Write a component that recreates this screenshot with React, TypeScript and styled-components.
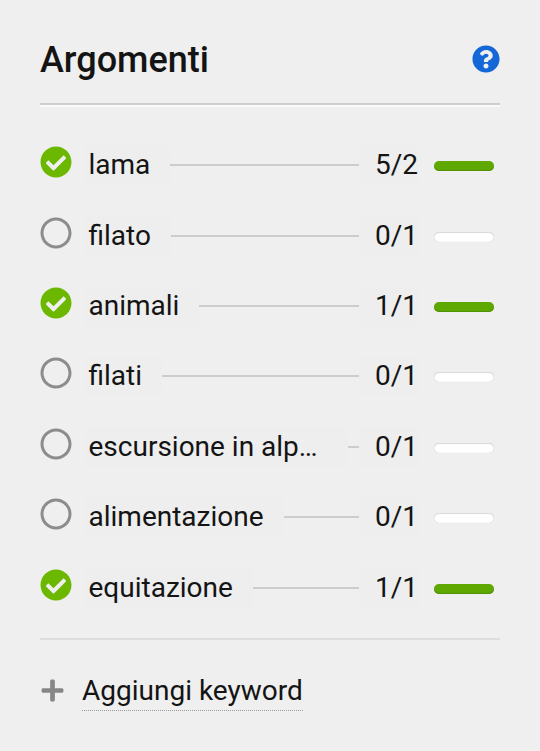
import styled, { createGlobalStyle } from 'styled-components';
import { FaCheckCircle, FaPlus, FaQuestionCircle, FaRegCircle } from 'react-icons/fa';

const keywords = [
  { name: 'lama', count: '5/2', done: true },
  { name: 'filato', count: '0/1', done: false },
  { name: 'animali', count: '1/1', done: true },
  { name: 'filati', count: '0/1', done: false },
  { name: 'escursione in alpeggio', count: '0/1', done: false },
  { name: 'alimentazione', count: '0/1', done: false },
  { name: 'equitazione', count: '1/1', done: true },
];

function App() {
  return (
    <Panel>
      <GlobalStyle />
      <Header>
        <Title>Argomenti</Title>
        <HelpIcon />
      </Header>
      <List>
        {keywords.map((keyword) => (
          <Row key={keyword.name}>
            <Status>{keyword.done ? <DoneIcon /> : <TodoIcon />}</Status>
            <Name>{keyword.name}</Name>
            <Line />
            <Count>{keyword.count}</Count>
            <Bar $done={keyword.done} />
          </Row>
        ))}
      </List>
      <Footer>
        <AddIcon />
        <AddLabel>Aggiungi keyword</AddLabel>
      </Footer>
    </Panel>
  );
}

const GlobalStyle = createGlobalStyle`
  html, body {
    margin: 0;
    background: #efefef;
  }
`;

const Panel = styled.div`
  box-sizing: border-box;
  width: 540px;
  height: 751px;
  padding: 40px 40px 0;
  overflow: hidden;
  background: #efefef;
  color: #141414;
  font-family: Roboto, sans-serif;
`;

const Header = styled.header`
  box-sizing: border-box;
  height: 65px;
  display: flex;
  justify-content: space-between;
  border-bottom: 2px solid #cdcdcd;
  box-shadow: 0 2px 0 #fafafa;
`;

const Title = styled.h2`
  margin: 0;
  font-size: 36px;
  line-height: 40px;
  font-weight: 500;
`;

const HelpIcon = styled(FaQuestionCircle)`
  width: 28px;
  height: 28px;
  margin-top: 5px;
  color: #1467d6;
`;

const List = styled.ul`
  list-style: none;
  margin: 0;
  padding: 40.3px 0 0;
  display: flex;
  flex-direction: column;
  gap: 30.4px;
`;

const Row = styled.li`
  height: 40px;
  display: flex;
  align-items: center;
`;

const Status = styled.span`
  width: 45px;
  height: 32px;
  flex: none;
  margin-top: -6px;
`;

const DoneIcon = styled(FaCheckCircle)`
  display: block;
  width: 32px;
  height: 32px;
  color: #6cb800;
`;

const TodoIcon = styled(FaRegCircle)`
  display: block;
  width: 32px;
  height: 32px;
  color: #8c8c8c;
`;

const Name = styled.span`
  box-sizing: border-box;
  max-width: 263px;
  padding: 0 20px 0 3.5px;
  font-size: 28px;
  line-height: 40px;
  font-weight: 400;
  white-space: nowrap;
  overflow: hidden;
  text-overflow: ellipsis;
  background: #eeeeee;
`;

const Line = styled.span`
  flex: 1;
  min-width: 0;
  height: 2px;
  background: #cdcdcd;
`;

const Count = styled.span`
  box-sizing: border-box;
  width: 59px;
  flex: none;
  padding-left: 16px;
  font-size: 28px;
  line-height: 40px;
  white-space: nowrap;
  background: #eeeeee;
`;

const Bar = styled.span<{ $done: boolean }>`
  box-sizing: border-box;
  width: 60px;
  height: 10px;
  flex: none;
  margin: 2px 6px 0 16px;
  border-radius: 5px;
  background: ${(p) => (p.$done ? '#5fa800' : '#ffffff')};
  box-shadow: ${(p) =>
    p.$done ? 'inset 0 -1px 1px #4f8f00' : 'inset 0 0 1px #b8b8b8, inset 0 1px 1px #dcdcdc'};
`;

const Footer = styled.div`
  margin-top: 30.3px;
  padding-top: 35px;
  border-top: 2px solid #dddddd;
  display: flex;
  align-items: flex-start;
  gap: 17.5px;
`;

const AddIcon = styled(FaPlus)`
  width: 25px;
  height: 25px;
  margin-top: 3px;
  margin-left: -0.5px;
  color: #868686;
`;

const AddLabel = styled.span`
  font-size: 28px;
  line-height: 32px;
  border-bottom: 1px dotted #999999;
  padding-bottom: 3px;
`;

export default App;
